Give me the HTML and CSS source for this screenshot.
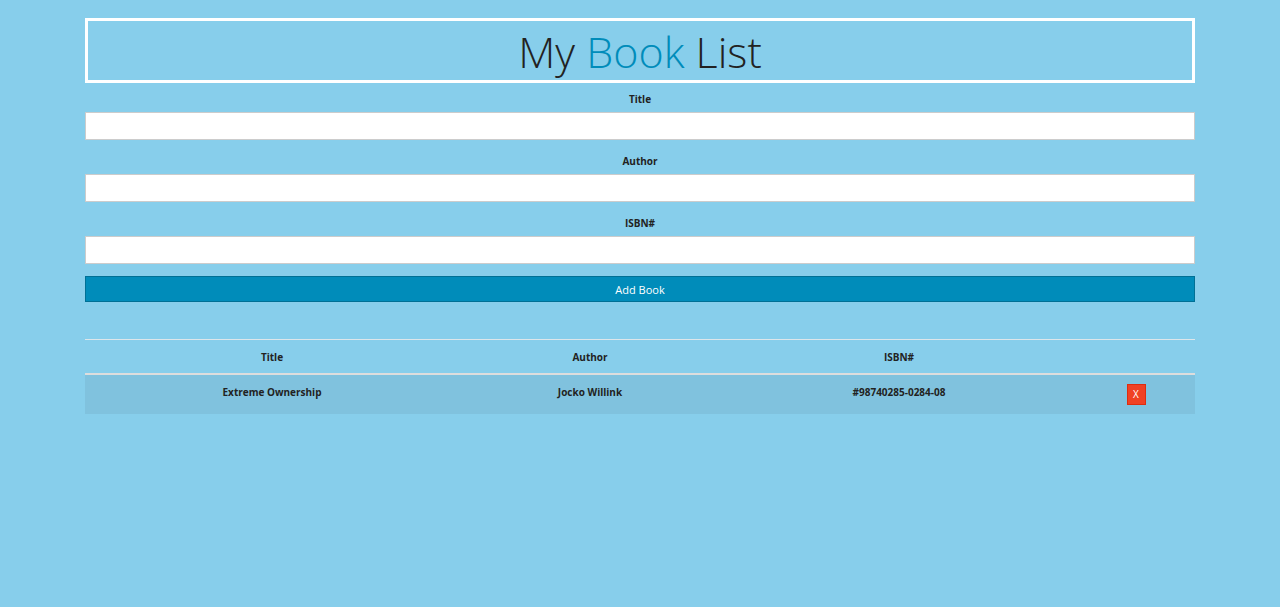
FILE: index.html
```html
<!DOCTYPE html>
<html>
<head>
<meta charset="utf-8">
<link rel="stylesheet" href="styles.css">
</head>
<body>
<div class="container">
  <h1 class="header">My <span class="accent">Book</span> List</h1>
  <form class="book-form">
    <label class="label">Title</label>
    <input class="field" type="text">
    <label class="label">Author</label>
    <input class="field" type="text">
    <label class="label">ISBN#</label>
    <input class="field" type="text">
    <button type="button" class="btn">Add Book</button>
  </form>
  <table class="books">
    <colgroup>
      <col class="c1"><col class="c2"><col class="c3"><col class="c4">
    </colgroup>
    <thead>
      <tr><th>Title</th><th>Author</th><th>ISBN#</th><th></th></tr>
    </thead>
    <tbody>
      <tr>
        <td>Extreme Ownership</td>
        <td>Jocko Willink</td>
        <td>#98740285-0284-08</td>
        <td><span class="del">X</span></td>
      </tr>
    </tbody>
  </table>
</div>
</body>
</html>
```

FILE: styles.css
```css
html, body {
  margin: 0;
  padding: 0;
}
body {
  background: #87ceeb;
  font-family: "Open Sans", "Liberation Sans", sans-serif;
  color: #222222;
}
.container {
  width: 1110px;
  margin: 0 auto;
  padding-top: 18px;
}
.header {
  margin: 0;
  height: 59px;
  border: 3px solid #ffffff;
  text-align: center;
  font-weight: 300;
  font-size: 43px;
  line-height: 62px;
  color: #222222;
}
.accent {
  color: #008cba;
}
.book-form {
  display: flex;
  flex-direction: column;
  padding-top: 8px;
}
.label {
  display: block;
  text-align: center;
  font-size: 10px;
  font-weight: 700;
  line-height: 16px;
  height: 16px;
  margin-bottom: 5px;
}
.field {
  box-sizing: border-box;
  height: 28px;
  margin: 0 0 13px 0;
  border: 1px solid #cccccc;
  background: #ffffff;
  padding: 4px 8px;
  font-size: 14px;
  font-family: inherit;
}
.field:last-of-type {
  margin-bottom: 12px;
}
.btn {
  box-sizing: border-box;
  height: 26px;
  width: 100%;
  background: #008cba;
  border: 1px solid #007095;
  color: #ffffff;
  font-family: inherit;
  font-size: 11px;
  font-weight: 400;
  padding: 0;
  cursor: pointer;
}
.books {
  width: 100%;
  margin-top: 37px;
  border-collapse: collapse;
  table-layout: fixed;
  border-top: 1px solid #dde6ea;
}
.c1 { width: 374px; }
.c2 { width: 262px; }
.c3 { width: 356px; }
.c4 { width: 118px; }
.books th {
  height: 33px;
  font-size: 10px;
  font-weight: 700;
  text-align: center;
  padding: 0;
  border-bottom: 2px solid #dddddd;
}
.books td {
  height: 40px;
  font-size: 10px;
  font-weight: 700;
  text-align: center;
  vertical-align: top;
  line-height: 12px;
  padding: 11px 0 0 0;
  box-sizing: border-box;
}
.books tbody tr {
  background: #80c2de;
}
.books td .del {
  display: inline-block;
  box-sizing: border-box;
  width: 19px;
  height: 21px;
  margin-top: -2px;
  background: #f04124;
  border: 1px solid #de2d0f;
  color: #ffffff;
  font-weight: 400;
  font-size: 10px;
  line-height: 19px;
}
```
